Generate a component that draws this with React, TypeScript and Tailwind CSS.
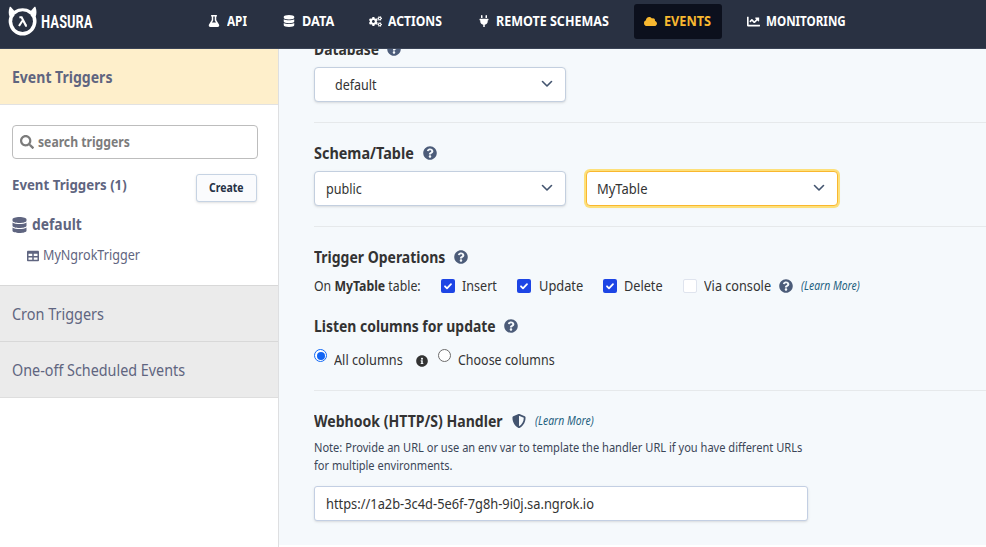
import { ReactNode, useLayoutEffect, useRef } from "react";
import {
  FaChartLine, FaCloud, FaCogs, FaDatabase, FaFlask, FaInfoCircle, FaPlug,
  FaQuestionCircle, FaSearch, FaShieldAlt, FaTable,
} from "react-icons/fa";

/* A single line of text condensed to the width given by its class. */
function T({ className = "", children }: { className?: string; children: ReactNode }) {
  const outer = useRef<HTMLSpanElement>(null);
  const inner = useRef<HTMLSpanElement>(null);
  useLayoutEffect(() => {
    if (outer.current && inner.current) {
      inner.current.style.transform = `scaleX(${outer.current.clientWidth / inner.current.offsetWidth})`;
    }
  }, []);
  return (
    <span ref={outer} className={`block shrink-0 whitespace-nowrap ${className}`}>
      <span ref={inner} className="inline-block origin-left align-top">{children}</span>
    </span>
  );
}

function Logo() {
  return (
    <svg viewBox="0 0 30 31" className="h-[31px] w-[30px] shrink-0" fill="none">
      <path
        d="M1.6 1.2C.4 4.6.5 7.8 1.5 10.5C.6 13 .4 15.5 1 18C2.3 24.8 8 29.6 14.6 29.6C21.2 29.6 26.9 24.8 28.2 18C28.8 15.5 28.6 13 27.7 10.5C28.7 7.8 28.8 4.6 27.6 1.2C27.3 .5 26.7 .6 26.3 1.1L23 4.7C20.6 3 17.6 2.2 14.6 2.2C11.6 2.2 8.6 3 6.2 4.7L2.9 1.1C2.5 .6 1.9 .5 1.6 1.2Z"
        fill="#fff"
      />
      <circle cx="14.6" cy="15.6" r="10.4" fill="#293142" />
      <path d="M11.4 11.2h2.2l4.300 8.400h1M14.400 14.800l-3.400 5.200" stroke="#fff" strokeWidth="2.100" />
    </svg>
  );
}

function Select({ children, className = "", inset = "pl-[11px]" }: { children: ReactNode; className?: string; inset?: string }) {
  return (
    <div className={`flex h-[35px] w-[252px] shrink-0 items-center justify-between rounded-[4px] border bg-white pr-[12px] text-[14px] leading-[20px] shadow-sm ${inset} ${className}`}>
      {children}
      <svg viewBox="0 0 12 8" className="mb-[2px] h-[8px] w-[12px]" fill="none" stroke="#43546f" strokeWidth="1.600" strokeLinecap="round" strokeLinejoin="round">
        <path d="M1.500 1.500 6 6l4.500-4.500" />
      </svg>
    </div>
  );
}

function Check({ on = false }: { on?: boolean }) {
  return on ? (
    <span className="flex size-[14px] shrink-0 items-center justify-center rounded-[2px] bg-[#1d45e5]">
      <svg viewBox="0 0 14 14" className="size-[14px]" fill="none" stroke="#fff" strokeWidth="1.800" strokeLinecap="round" strokeLinejoin="round">
        <path d="m4 7.300 2 2 4-4.200" />
      </svg>
    </span>
  ) : (
    <span className="size-[14px] shrink-0 rounded-[2px] border border-[#dfe4ee] bg-white" />
  );
}

const Help = ({ className = "" }: { className?: string }) => (
  <FaQuestionCircle className={`size-[14px] shrink-0 text-[#4c5c79] ${className}`} />
);

const heading = "text-[16px] leading-[22px] font-bold";

export default function App() {
  return (
    <div className="flex h-[547px] w-[986px] flex-col overflow-hidden bg-white font-['Noto_Sans',sans-serif] text-[#333]">
      <header className="flex h-[49px] shrink-0 items-start border-b border-[#3a4356] bg-[#293142] text-[13.500px] leading-[20px] font-bold text-white">
        <div className="flex h-[43px] w-[209px] items-center pl-[8px]">
          <Logo />
          <T className="ml-[3px] w-[52px] font-['Roboto',sans-serif] text-[17.500px] font-semibold [font-stretch:75%]">HASURA</T>
        </div>
        <nav className="flex h-[42px] items-center">
          <FaFlask className="-ml-px size-[12px]" />
          <T className="ml-[7px] w-[20px]">API</T>
          <FaDatabase className="ml-[36px] size-[12px]" />
          <T className="ml-[7px] w-[32px]">DATA</T>
          <FaCogs className="ml-[35px] size-[13px]" />
          <T className="ml-[6px] w-[54px]">ACTIONS</T>
          <FaPlug className="ml-[36px] size-[12px]" />
          <T className="ml-[6px] w-[113px]">REMOTE SCHEMAS</T>
          <div className="ml-[25px] flex h-[35px] w-[88px] items-center rounded-[3px] bg-[#0c101d] pl-[10px] text-[#f8b830]">
            <FaCloud className="size-[13px]" />
            <T className="ml-[7px] w-[47px]">EVENTS</T>
          </div>
          <FaChartLine className="ml-[25px] size-[13px]" />
          <T className="ml-[6px] w-[80px]">MONITORING</T>
        </nav>
      </header>

      <div className="flex min-h-0 flex-1">
        <aside className="flex w-[279px] shrink-0 flex-col border-r border-[#dedfe1] bg-white text-[#5f6580]">
          <div className="flex h-[56px] items-center border-b border-[#e2e2e2] bg-[#feefcb] pl-[12px] text-[16px] font-bold">
            <T className="w-[100px]">Event Triggers</T>
          </div>
          <div className="h-[180px] px-[12px] pt-[20px]">
            <div className="flex h-[34px] w-[246px] items-center rounded-[4px] border border-[#bdbdbd] pl-[7px] text-[13.500px] font-bold text-[#7c7c7c]">
              <FaSearch className="size-[14px]" />
              <T className="ml-[4px] w-[92px]">search triggers</T>
            </div>
            <div className="mt-[15px] flex h-[28px] items-start justify-between pr-[9px]">
              <T className="-mt-px w-[115px] text-[14.500px] leading-[22px] font-bold">Event Triggers (1)</T>
              <div className="flex h-[28px] w-[61px] items-center justify-center rounded-[3px] border border-[#c6d3e3] bg-[#fafbfd] text-[12px] font-bold text-[#263246] shadow-sm">
                <T className="w-[35px]">Create</T>
              </div>
            </div>
            <div className="mt-[11px] flex h-[22px] items-center text-[15.500px] leading-[22px] font-bold">
              <FaDatabase className="mt-[2px] h-[16px] w-[15px]" />
              <T className="ml-[5px] w-[50px]">default</T>
            </div>
            <div className="mt-[10px] flex h-[20px] items-center pl-[15px] text-[14px] leading-[20px]">
              <FaTable className="mt-[2px] size-[12px]" />
              <T className="ml-[4px] w-[97px]">MyNgrokTrigger</T>
            </div>
          </div>
          <div className="flex h-[57px] items-center border-t border-b border-t-[#d8d8d8] border-b-[#d8d8d8] bg-[#ebebeb] pl-[12px] text-[16px]">
            <T className="w-[92px]">Cron Triggers</T>
          </div>
          <div className="flex h-[56px] items-center border-b border-[#dedede] bg-[#ebebeb] pl-[12px] text-[16px]">
            <T className="w-[173px]">One-off Scheduled Events</T>
          </div>
        </aside>

        <main className="flex h-[496px] min-w-0 flex-1 flex-col overflow-hidden bg-[#f5f9fc] pl-[35px]">
          <section className="-mt-[11px] h-[85px] shrink-0 border-b border-[#e6e9eb]">
            <div className={`flex items-center ${heading}`}>
              <T className="w-[65px]">Database</T>
              <Help className="ml-[8px]" />
            </div>
            <Select className="mt-[7px] border-[#c3cfdf]" inset="pl-[20px]"><T className="w-[42px]">default</T></Select>
          </section>

          <section className="h-[104px] shrink-0 border-b border-[#e6e9eb] pt-[19px]">
            <div className={`flex items-center ${heading}`}>
              <T className="w-[100px]">Schema/Table</T>
              <Help className="ml-[9px]" />
            </div>
            <div className="mt-[7px] flex gap-[20px]">
              <Select className="border-[#c3cfdf]"><T className="w-[36px]">public</T></Select>
              <Select className="border-[#f9b72f] ring-2 ring-[#fde07a]" inset="pl-[10px]"><T className="w-[50px]">MyTable</T></Select>
            </div>
          </section>

          <section className="h-[164px] shrink-0 border-b border-[#e6e9eb] pt-[19px]">
            <div className={`flex items-center ${heading}`}>
              <T className="w-[131px]">Trigger Operations</T>
              <Help className="ml-[9px]" />
            </div>
            <div className="mt-[8px] flex h-[20px] items-center text-[14px] leading-[20px]">
              <T className="w-[107px]">On <b>MyTable</b> table:</T>
              <span className="w-[20px]" />
              <Check on />
              <T className="ml-[7px] w-[35px]">Insert</T>
              <span className="w-[20px]" />
              <Check on />
              <T className="ml-[8px] w-[44px]">Update</T>
              <span className="w-[20px]" />
              <Check on />
              <T className="ml-[7px] w-[39px]">Delete</T>
              <span className="w-[20px]" />
              <Check />
              <T className="ml-[7px] w-[67px]">Via console</T>
              <Help className="ml-[8px]" />
              <T className="ml-[8px] w-[59px] text-[12px] text-[#1f6180] italic">(Learn More)</T>
            </div>
            <div className={`mt-[19px] flex items-center ${heading}`}>
              <T className="w-[182px]">Listen columns for update</T>
              <Help className="ml-[8px]" />
            </div>
            <div className="mt-[11px] flex h-[24px] items-start text-[14px] leading-[20px]">
              <span className="mt-px flex size-[13px] shrink-0 items-center justify-center rounded-full border border-[#1269f5] bg-white">
                <span className="size-[8px] rounded-full bg-[#1265f5]" />
              </span>
              <T className="mt-[2px] ml-[7px] w-[69px]">All columns</T>
              <FaInfoCircle className="mt-[7px] ml-[13px] size-[12px]" />
              <span className="mt-px ml-[10px] size-[13px] shrink-0 rounded-full border border-[#6c6c6c] bg-white" />
              <T className="mt-[2px] ml-[7px] w-[97px]">Choose columns</T>
            </div>
          </section>

          <section className="pt-[19px]">
            <div className={`flex items-center ${heading}`}>
              <T className="w-[189px]">Webhook (HTTP/S) Handler</T>
              <FaShieldAlt className="ml-[9px] size-[14px] text-[#43546f]" />
              <T className="ml-[9px] w-[59px] text-[12px] font-normal text-[#1f6180] italic">(Learn More)</T>
            </div>
            <div className="mt-[7px] text-[12px] leading-[17.500px] text-[#3b4658]">
              <T className="w-[488px]">Note: Provide an URL or use an env var to template the handler URL if you have different URLs</T>
              <T className="w-[138px]">for multiple environments.</T>
            </div>
            <div className="mt-[12px] flex h-[35px] w-[494px] items-center rounded-[3px] border border-[#c3cfe3] bg-white pl-[11px] text-[14px] leading-[20px] shadow-sm">
              <T className="w-[268px]">https://1a2b-3c4d-5e6f-7g8h-9i0j.sa.ngrok.io</T>
            </div>
          </section>
        </main>
      </div>
    </div>
  );
}
